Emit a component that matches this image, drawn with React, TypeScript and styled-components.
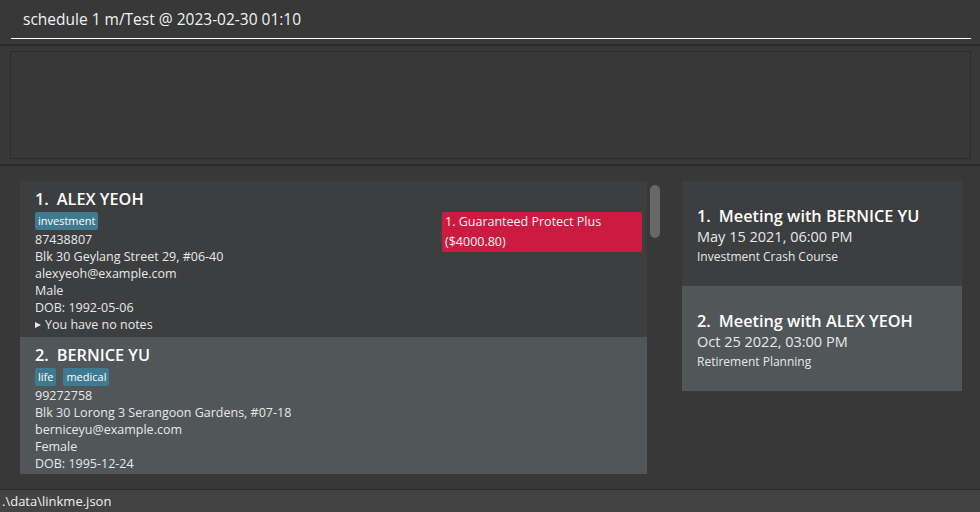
import React from 'react';
import styled, { createGlobalStyle } from 'styled-components';

const GlobalStyle = createGlobalStyle`
  html, body {
    margin: 0;
    padding: 0;
    background: #383838;
  }
  * {
    box-sizing: border-box;
  }
  body {
    font-family: "Open Sans", "Noto Sans", sans-serif;
    color: #ffffff;
  }
`;

const Window = styled.div`
  width: 980px;
  height: 512px;
  display: flex;
  flex-direction: column;
  background: #383838;
  overflow: hidden;
`;

const CommandPane = styled.div`
  height: 46px;
  padding: 0 9px 0 11px;
  border-bottom: 2px solid #2b2b2b;
`;

const CommandInput = styled.div`
  height: 39px;
  display: flex;
  align-items: center;
  padding-left: 12px;
  padding-bottom: 1px;
  border-bottom: 1px solid #ffffff;
  font-size: 15.5px;
  color: #f2f2f2;
  white-space: nowrap;
`;

const ResultPane = styled.div`
  height: 120px;
  padding: 5px 9px 5px 10px;
  border-bottom: 2px solid #2b2b2b;
`;

const ResultBox = styled.div`
  height: 108px;
  border: 1px solid #2c2c2c;
  background: #383838;
`;

const MainArea = styled.div`
  flex: 1;
  display: flex;
  gap: 19px;
  padding: 15px 18px 15px 20px;
  min-height: 0;
`;

const ListFrame = styled.div<{ $width: number }>`
  position: relative;
  width: ${p => p.$width}px;
  height: 100%;
  overflow: hidden;
  display: flex;
  flex-direction: column;
`;

const ScrollThumb = styled.div`
  position: absolute;
  top: 4px;
  left: 630px;
  width: 10px;
  height: 53px;
  border-radius: 5px;
  background: #676767;
`;

const PersonCard = styled.div<{ $alt: boolean }>`
  flex-shrink: 0;
  width: 627px;
  padding: 6px 5px 4px 15px;
  background: ${p => (p.$alt ? '#515658' : '#3c3e3f')};
`;

const CardTitle = styled.div`
  font-size: 16.3px;
  font-weight: 600;
  line-height: 24px;
  color: #ffffff;
  white-space: nowrap;
`;

const Index = styled.span`
  margin-right: 8px;
`;

const CardBody = styled.div`
  display: flex;
  align-items: flex-start;
  margin-top: 1px;
`;

const Details = styled.div`
  flex: 1;
  display: flex;
  flex-direction: column;
`;

const TagRow = styled.div`
  display: flex;
  gap: 7px;
  margin-bottom: 1px;
`;

const Tag = styled.span`
  height: 18px;
  line-height: 18px;
  padding: 0 3px;
  border-radius: 2px;
  background: #3e7b91;
  color: #ffffff;
  font-size: 11px;
`;

const Line = styled.div`
  font-size: 12.5px;
  line-height: 17px;
  color: #e8e8e8;
  white-space: nowrap;
`;

const Notes = styled(Line)`
  display: flex;
  align-items: center;
`;

const Arrow = styled.span`
  width: 0;
  height: 0;
  margin-right: 4px;
  border-left: 6px solid #e8e8e8;
  border-top: 3.5px solid transparent;
  border-bottom: 3.5px solid transparent;
`;

const Policy = styled.div`
  width: 200px;
  padding: 0 3px;
  border-radius: 2px;
  background: #cd1a40;
  color: #f4f4f4;
  font-size: 12.5px;
  line-height: 20px;
`;

const MeetingCard = styled.div<{ $alt: boolean }>`
  flex-shrink: 0;
  height: 105px;
  display: flex;
  flex-direction: column;
  justify-content: center;
  padding: 3px 15px 0;
  background: ${p => (p.$alt ? '#515658' : '#3c3e3f')};
`;

const MeetingTitle = styled.div`
  font-size: 16.3px;
  font-weight: 600;
  line-height: 22px;
  color: #ffffff;
  white-space: nowrap;
`;

const MeetingDate = styled.div`
  font-size: 14.5px;
  line-height: 20px;
  color: #e8e8e8;
`;

const MeetingDesc = styled.div`
  margin-top: 1px;
  font-size: 12px;
  line-height: 17px;
  color: #e8e8e8;
`;

const StatusBar = styled.div`
  height: 23px;
  padding-left: 2px;
  border-top: 1px solid #2b2b2b;
  background: #434343;
  font-size: 13px;
  line-height: 22px;
  color: #f0f0f0;
`;

interface Person {
  name: string;
  tags: string[];
  phone: string;
  address: string;
  email: string;
  gender: string;
  dob: string;
  policies: string[];
  notes: boolean;
}

const persons: Person[] = [
  {
    name: 'ALEX YEOH',
    tags: ['investment'],
    phone: '87438807',
    address: 'Blk 30 Geylang Street 29, #06-40',
    email: 'alexyeoh@example.com',
    gender: 'Male',
    dob: '1992-05-06',
    policies: ['1. Guaranteed Protect Plus ($4000.80)'],
    notes: true,
  },
  {
    name: 'BERNICE YU',
    tags: ['life', 'medical'],
    phone: '99272758',
    address: 'Blk 30 Lorong 3 Serangoon Gardens, #07-18',
    email: 'berniceyu@example.com',
    gender: 'Female',
    dob: '1995-12-24',
    policies: [],
    notes: false,
  },
];

const meetings = [
  { title: 'Meeting with BERNICE YU', date: 'May 15 2021, 06:00 PM', desc: 'Investment Crash Course' },
  { title: 'Meeting with ALEX YEOH', date: 'Oct 25 2022, 03:00 PM', desc: 'Retirement Planning' },
];

const App: React.FC = () => (
  <Window>
    <GlobalStyle />
    <CommandPane>
      <CommandInput>schedule 1 m/Test @ 2023-02-30 01:10</CommandInput>
    </CommandPane>
    <ResultPane>
      <ResultBox />
    </ResultPane>
    <MainArea>
      <ListFrame $width={643}>
        {persons.map((p, i) => (
          <PersonCard key={p.name} $alt={i % 2 === 1}>
            <CardTitle>
              <Index>{i + 1}.</Index>
              {p.name}
            </CardTitle>
            <CardBody>
              <Details>
                <TagRow>
                  {p.tags.map(t => (
                    <Tag key={t}>{t}</Tag>
                  ))}
                </TagRow>
                <Line>{p.phone}</Line>
                <Line>{p.address}</Line>
                <Line>{p.email}</Line>
                <Line>{p.gender}</Line>
                <Line>DOB: {p.dob}</Line>
                {p.notes && (
                  <Notes>
                    <Arrow />
                    You have no notes
                  </Notes>
                )}
              </Details>
              {p.policies.map(pol => (
                <Policy key={pol}>{pol}</Policy>
              ))}
            </CardBody>
          </PersonCard>
        ))}
        <ScrollThumb />
      </ListFrame>
      <ListFrame $width={280}>
        {meetings.map((m, i) => (
          <MeetingCard key={m.title} $alt={i % 2 === 1}>
            <MeetingTitle>
              <Index>{i + 1}.</Index>
              {m.title}
            </MeetingTitle>
            <MeetingDate>{m.date}</MeetingDate>
            <MeetingDesc>{m.desc}</MeetingDesc>
          </MeetingCard>
        ))}
      </ListFrame>
    </MainArea>
    <StatusBar>.\data\linkme.json</StatusBar>
  </Window>
);

export default App;
